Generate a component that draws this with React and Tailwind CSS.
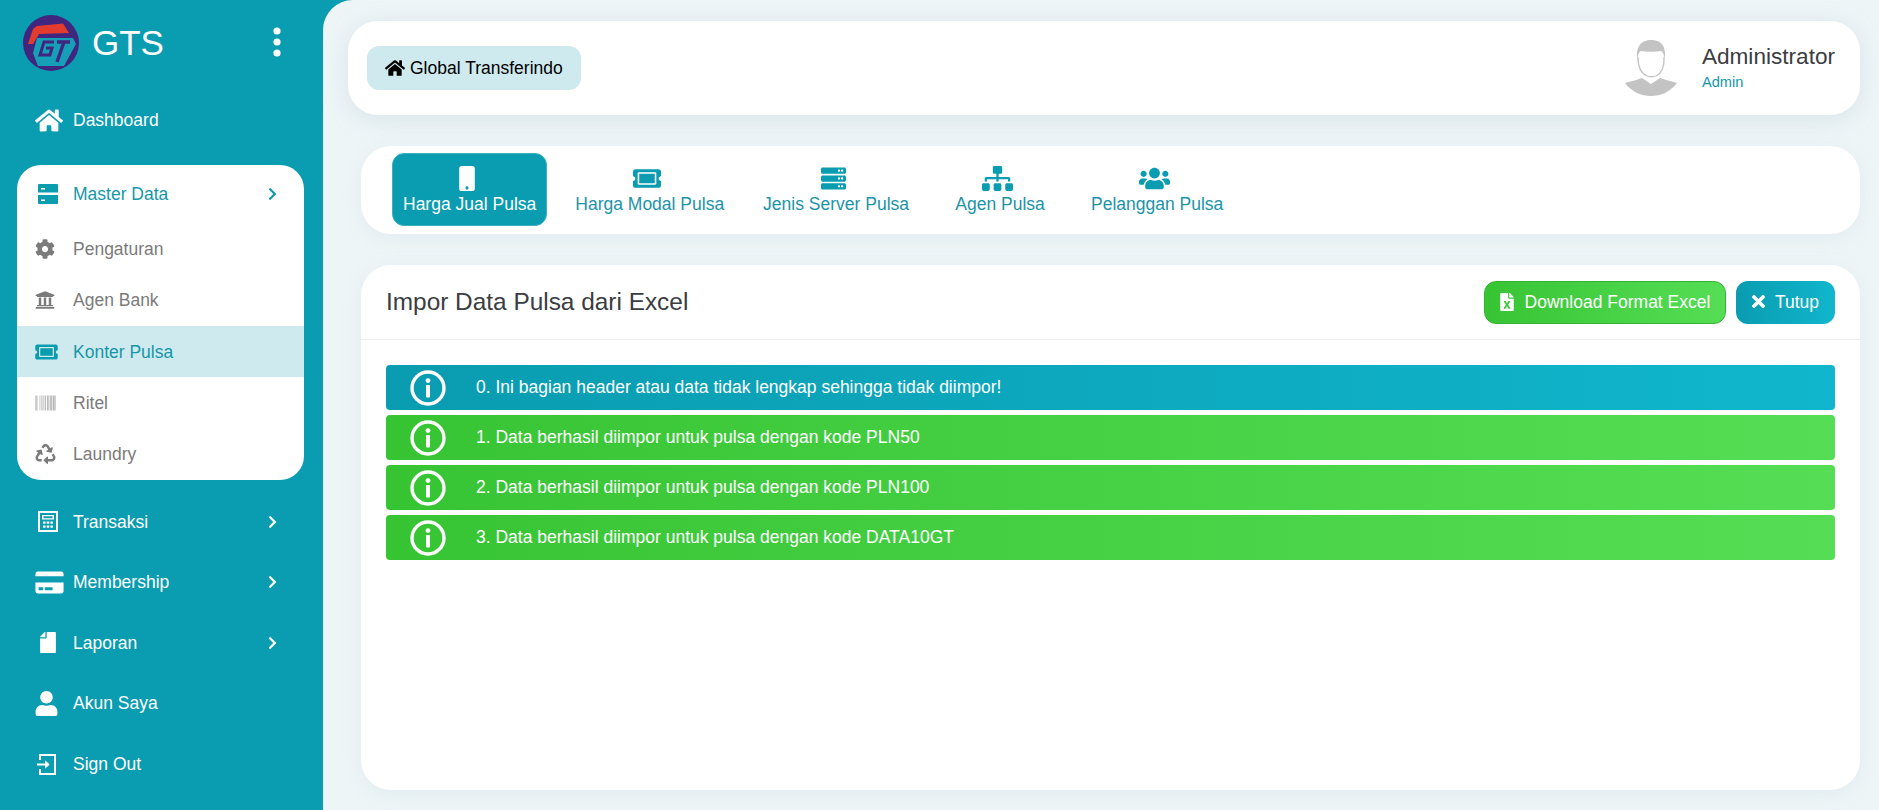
import React from "react";
import {
  FaHome, FaCog, FaUniversity, FaTicketAlt, FaBarcode, FaRecycle, FaCreditCard, FaUser,
  FaChevronRight, FaMobile, FaServer, FaSitemap, FaUsers, FaFileExcel, FaTimes, FaFile,
} from "react-icons/fa";

function ServerTwo({ className }) {
  return (
    <svg viewBox="0 0 20 20" className={className} fill="currentColor">
      <path d="M1 0h18a1 1 0 0 1 1 1v7.500H0V1a1 1 0 0 1 1-1zm2 4v1.600h4V4z" fillRule="evenodd" />
      <path d="M0 11h20v8a1 1 0 0 1-1 1H1a1 1 0 0 1-1-1zm3 4.500v1.600h4v-1.600z" fillRule="evenodd" />
    </svg>
  );
}

function Calc({ className }) {
  return (
    <svg viewBox="0 0 20 21" className={className} fill="currentColor">
      <path fillRule="evenodd" d="M0 0h20v21H0zM2 2v17h16V2z" />
      <path fillRule="evenodd" d="M4 4h12v4.500H4zM5.500 5.200v2h9v-2z" />
      <rect x="5" y="10.500" width="2.600" height="2.200" />
      <rect x="8.700" y="10.500" width="2.600" height="2.200" />
      <rect x="12.400" y="10.500" width="2.600" height="2.200" />
      <rect x="5" y="14.500" width="2.600" height="2.200" />
      <rect x="8.700" y="14.500" width="2.600" height="2.200" />
      <rect x="12.400" y="14.500" width="2.600" height="2.200" />
    </svg>
  );
}

function SignOutIcon({ className }) {
  return (
    <svg viewBox="0 0 20 21" className={className} fill="none" stroke="currentColor" strokeWidth="2">
      <path d="M3 6V1h15v19H3v-5" />
      <path d="M0 10.500h11" />
      <path d="M8 6.800l4.200 3.700L8 14.200" fill="currentColor" strokeWidth="1" />
    </svg>
  );
}

function Dots() {
  return (
    <svg viewBox="0 0 8 30" className="w-[8px] h-[30px] mb-[2px] text-white" fill="currentColor">
      <circle cx="4" cy="4" r="3.600" />
      <circle cx="4" cy="15" r="3.600" />
      <circle cx="4" cy="26" r="3.600" />
    </svg>
  );
}

function InfoCircle() {
  return (
    <svg viewBox="0 0 36 36" className="w-[36px] h-[36px]" fill="none">
      <circle cx="18" cy="18" r="16" stroke="white" strokeWidth="3.400" />
      <circle cx="18" cy="10.600" r="2.400" fill="white" />
      <rect x="16" y="15" width="4" height="12.500" rx="0.800" fill="white" />
    </svg>
  );
}

function Logo() {
  return (
    <svg viewBox="0 0 56 56" className="w-[56px] h-[56px] shrink-0">
      <circle cx="28" cy="28" r="28" fill="#40267f" />
      <path d="M5 29 L10 14 L14 11 L40 8.500 L46 18 L16 19 L10 29 Z" fill="#e33c2f" />
      <path d="M14 23 H50 L53 29 L41 51 H15 L10 38 Z" fill="#15a0b8" />
      <path d="M31 27 H21 L17 40 H27 L29 33 H23" fill="none" stroke="#40267f" strokeWidth="3" />
      <path d="M34 27 H47 M41 27 L34 47" fill="none" stroke="#40267f" strokeWidth="3.400" />
    </svg>
  );
}

function Avatar() {
  return (
    <svg viewBox="0 0 52 56" className="w-[52px] h-[56px] shrink-0">
      <path d="M12.500 20 C10 6 17 0 26 0 C36 0 42 6 39.500 20 C39 14 38 12 36 11 C30 12 21 12 16 11 C14 12 13 14 12.500 20 Z" fill="#c3c3c3" />
      <path d="M13 17 C13 26 15 33 22 36 C25 37 28 37 31 36 C37 33 39.500 26 39 17" fill="none" stroke="#c3c3c3" strokeWidth="1.300" />
      <path d="M17 38 L26 44 L35 38 C41 40 47 41.500 52 43 C45 52 36 56 26 56 C16 56 7 52 0 43 C6 41.500 11 40 17 38 Z" fill="#c3c3c3" />
      <path d="M18 37 L26 43.500 L34 37 L31 36.500 L26 40.500 L21 36.500 Z" fill="#fff" />
    </svg>
  );
}

function TopItem({ icon, label, chevron }) {
  return (
    <div className="h-[60.6px] flex items-center pl-[35px] pr-[46px] text-white text-[17.5px]">
      <span className="w-[38px] shrink-0 flex items-center">{icon}</span>
      <span className="flex-1">{label}</span>
      {chevron && <FaChevronRight className="w-[9px] h-[14px]" />}
    </div>
  );
}

function SubItem({ icon, label, active }) {
  return (
    <div
      className={`h-[51.3px] flex items-center pl-[18px] text-[17.5px] ${
        active ? "bg-[#cfeaee] text-[#1597a9]" : "text-[#7b7b7b]"
      }`}
    >
      <span className={`w-[38px] shrink-0 flex items-center ${active ? "text-[#0c9cb0]" : "text-[#7b7b7b]"}`}>{icon}</span>
      <span>{label}</span>
    </div>
  );
}

function Tab({ icon, label, active }) {
  return (
    <div
      className={`h-[73px] min-w-[126px] px-[10px] pt-[2px] border rounded-[12px] flex flex-col items-center justify-center text-[17.5px] leading-[24px] ${
        active ? "bg-[#0a9cb0] border-[#3fb0c0] text-white" : "border-transparent text-[#1c94a8]"
      }`}
    >
      <span className={`h-[26px] pr-[6px] flex items-center ${active ? "text-white" : "text-[#0a9cb0]"}`}>{icon}</span>
      <span className="mt-[1px]">{label}</span>
    </div>
  );
}

function Alert({ text, tone }) {
  return (
    <div
      className={`h-[45px] rounded-[4px] flex items-center text-white text-[17.5px] pl-[24px] ${
        tone === "teal"
          ? "bg-gradient-to-r from-[#0a9cb0] to-[#10b6cd]"
          : "bg-gradient-to-r from-[#37c433] to-[#55de55]"
      }`}
    >
      <span className="w-[66px] shrink-0 flex items-center">
        <InfoCircle />
      </span>
      <span>{text}</span>
    </div>
  );
}

export default function App() {
  return (
    <div className="w-[1879px] h-[810px] overflow-hidden flex bg-[#0a9cb0] font-['Liberation_Sans',Arial,sans-serif]">
      <aside className="w-[323px] shrink-0 flex flex-col">
        <div className="h-[90px] shrink-0 flex items-center pl-[23px] pr-[42px] pb-[4px]">
          <Logo />
          <span className="ml-[13px] mb-[2px] flex-1 text-white text-[35px] leading-none">GTS</span>
          <Dots />
        </div>
        <TopItem icon={<FaHome className="w-[28px] h-[25px]" />} label="Dashboard" />
        <div className="ml-[17px] mr-[19px] mt-[14.4px] bg-white rounded-[24px] overflow-hidden">
          <div className="h-[58.5px] flex items-center pl-[18px] pr-[27px] text-[17.5px] text-[#1597a9]">
            <span className="w-[38px] shrink-0 flex items-center text-[#0c9cb0]">
              <ServerTwo className="w-[20px] h-[20px] ml-[3px]" />
            </span>
            <span className="flex-1">Master Data</span>
            <FaChevronRight className="w-[9px] h-[14px]" />
          </div>
          <SubItem icon={<FaCog className="w-[20px] h-[20px]" />} label="Pengaturan" />
          <SubItem icon={<FaUniversity className="w-[20px] h-[20px]" />} label="Agen Bank" />
          <SubItem active icon={<FaTicketAlt className="w-[23px] h-[20px]" />} label="Konter Pulsa" />
          <SubItem icon={<FaBarcode className="w-[21px] h-[20px] opacity-70" />} label="Ritel" />
          <SubItem icon={<FaRecycle className="w-[21px] h-[20px]" />} label="Laundry" />
        </div>
        <div className="mt-[11.5px] flex flex-col">
          <TopItem chevron icon={<Calc className="w-[20px] h-[21px] ml-[3px]" />} label="Transaksi" />
          <TopItem chevron icon={<FaCreditCard className="w-[29px] h-[25px]" />} label="Membership" />
          <TopItem chevron icon={<FaFile className="w-[20px] h-[21px] ml-[3px] -scale-x-100" />} label="Laporan" />
          <TopItem icon={<FaUser className="w-[23px] h-[25px]" />} label="Akun Saya" />
          <TopItem icon={<SignOutIcon className="w-[20px] h-[21px] ml-[2px]" />} label="Sign Out" />
        </div>
      </aside>

      <main className="flex-1 min-w-0 bg-[#eef5f7] rounded-tl-[30px] pl-[25px] pr-[19px] pt-[21px] pb-[20px] flex flex-col">
        <header className="h-[94px] shrink-0 bg-white rounded-[30px] shadow-[0_4px_24px_rgba(130,170,185,0.22)] flex items-center pl-[19px] pr-[25px]">
          <div className="h-[44px] px-[18px] rounded-[12px] bg-[#cfeaee] flex items-center gap-[5px] text-black text-[17.5px]">
            <FaHome className="w-[20px] h-[18px]" />
            <span>Global Transferindo</span>
          </div>
          <div className="ml-auto flex items-center gap-[25px]">
            <Avatar />
            <div className="flex flex-col pb-[2px]">
              <span className="text-[22.6px] leading-[27px] text-[#3a3d42]">Administrator</span>
              <span className="text-[14.6px] leading-[18px] mt-[3px] text-[#1597a9]">Admin</span>
            </div>
          </div>
        </header>

        <nav className="ml-[13px] mt-[31px] h-[88px] shrink-0 bg-white rounded-[30px] shadow-[0_4px_20px_rgba(130,170,185,0.12)] flex items-center pl-[31px] gap-[17px] pb-[1px]">
          <Tab active icon={<FaMobile className="w-[16px] h-[25px]" />} label="Harga Jual Pulsa" />
          <Tab icon={<FaTicketAlt className="w-[28px] h-[25px]" />} label="Harga Modal Pulsa" />
          <Tab icon={<FaServer className="w-[25px] h-[25px]" />} label="Jenis Server Pulsa" />
          <Tab icon={<FaSitemap className="w-[31px] h-[25px]" />} label="Agen Pulsa" />
          <Tab icon={<FaUsers className="w-[31px] h-[25px]" />} label="Pelanggan Pulsa" />
        </nav>

        <section className="ml-[13px] mt-[31px] flex-1 bg-white rounded-[30px] shadow-[0_4px_20px_rgba(130,170,185,0.12)] flex flex-col">
          <div className="h-[75px] shrink-0 border-b border-[#eceeef] flex items-center pl-[25px] pr-[25px]">
            <h1 className="flex-1 text-[24.4px] text-[#3a3d42] font-normal">Impor Data Pulsa dari Excel</h1>
            <button className="h-[43px] w-[242px] rounded-[12px] border border-[#35b233] bg-gradient-to-r from-[#37c433] to-[#55de55] text-white text-[17.5px] flex items-center justify-center gap-[11px]">
              <FaFileExcel className="w-[14px] h-[18px]" />
              <span>Download Format Excel</span>
            </button>
            <button className="ml-[10px] h-[43px] w-[99px] rounded-[12px] bg-gradient-to-r from-[#0a9cb0] to-[#10b6cd] text-white text-[17.5px] flex items-center justify-center gap-[10px]">
              <FaTimes className="w-[13px] h-[19px] mb-[1px]" />
              <span>Tutup</span>
            </button>
          </div>
          <div className="px-[25px] pt-[25px] flex flex-col gap-[5px]">
            <Alert tone="teal" text="0. Ini bagian header atau data tidak lengkap sehingga tidak diimpor!" />
            <Alert tone="green" text="1. Data berhasil diimpor untuk pulsa dengan kode PLN50" />
            <Alert tone="green" text="2. Data berhasil diimpor untuk pulsa dengan kode PLN100" />
            <Alert tone="green" text="3. Data berhasil diimpor untuk pulsa dengan kode DATA10GT" />
          </div>
        </section>
      </main>
    </div>
  );
}
